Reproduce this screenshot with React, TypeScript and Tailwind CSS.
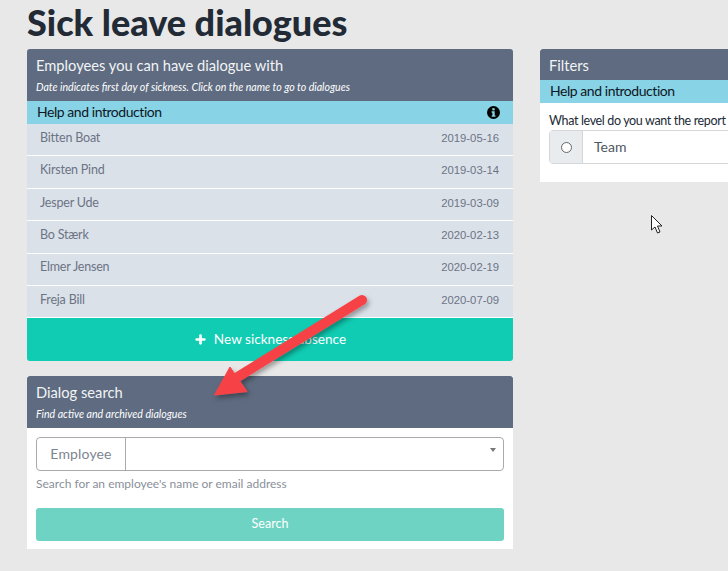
import { Plus } from "lucide-react";

const font = "font-['Lato','Noto_Sans',sans-serif]";

const EMPLOYEES = [
  { name: "Bitten Boat", date: "2019-05-16" },
  { name: "Kirsten Pind", date: "2019-03-14" },
  { name: "Jesper Ude", date: "2019-03-09" },
  { name: "Bo Stærk", date: "2020-02-13" },
  { name: "Elmer Jensen", date: "2020-02-19" },
  { name: "Freja Bill", date: "2020-07-09" },
];

function PanelHead({ title, sub }: { title: string; sub?: string }) {
  return (
    <div className="bg-[#5e6b80] text-white px-[9px] rounded-t-[3px]">
      <div className="text-[14.7px] leading-[20px] pt-[6px] pb-[5px] text-[#f2f4f6]">{title}</div>
      {sub && <div className="text-[10.6px] italic leading-[14px] pb-[7px]">{sub}</div>}
    </div>
  );
}

function HelpBar({ icon }: { icon?: boolean }) {
  return (
    <div className="h-[23px] bg-[#88d3e6] flex items-center justify-between pl-[10px] pr-[13px] pb-[2px] text-[14px] tracking-[-0.45px] text-[#0f1724]">
      <span>Help and introduction</span>
      {icon && (
        <svg width="13" height="13" viewBox="0 0 13 13" className="mt-[1px]">
          <circle cx="6.5" cy="6.5" r="6.5" fill="#000000" />
          <rect x="5.3" y="2.2" width="2.4" height="2.2" fill="#88d3e6" />
          <path d="M4.6 5.3 H7.7 V9.4 H8.5 V10.8 H4.6 V9.4 H5.4 V6.7 H4.6 Z" fill="#88d3e6" />
        </svg>
      )}
    </div>
  );
}

function EmployeeRow({ name, date }: { name: string; date: string }) {
  return (
    <div className="h-[32.4px] bg-[#dbe1e9] border-b border-white flex items-center justify-between pl-[13px] pr-[14px] pb-[3px] text-[12.5px] tracking-[-0.2px] text-[#6b7485]">
      <span>{name}</span>
      <span className="font-['Liberation_Sans',sans-serif] text-[11.3px] tracking-normal">{date}</span>
    </div>
  );
}

export default function App() {
  return (
    <div className={`relative w-[728px] h-[571px] overflow-hidden bg-[#e8e8e8] ${font}`}>
      <h1 className="pl-[27px] h-[49px] text-[36px] leading-[44px] font-black text-[#212a35]">Sick leave dialogues</h1>

      <div className="flex items-start pl-[27px] gap-[27px]">
        <div className="w-[486px] shrink-0">
          <PanelHead title="Employees you can have dialogue with" sub="Date indicates first day of sickness. Click on the name to go to dialogues" />
          <HelpBar icon />
          {EMPLOYEES.map((e) => (
            <EmployeeRow key={e.name} name={e.name} date={e.date} />
          ))}
          <div className="h-[43px] bg-[#10ccb2] rounded-b-[3px] flex items-center justify-center gap-[7px] pb-[1px] text-white text-[13.6px]">
            <Plus className="w-[13px] h-[13px]" strokeWidth={5} />
            <span>New sickness absence</span>
          </div>

          <div className="mt-[15px] bg-white">
            <PanelHead title="Dialog search" sub="Find active and archived dialogues" />
            <div className="px-[9px] pt-[9px] pb-[8px]">
              <div className="h-[34px] flex border border-[#aaaaaa] rounded-[4px]">
                <div className="w-[89px] border-r border-[#aaaaaa] flex items-center justify-center pb-[2px] text-[14px] text-[#7d8590] tracking-[0.15px]">Employee</div>
                <div className="flex-1 relative">
                  <div className="absolute right-[7px] top-[10px] border-x-[3px] border-x-transparent border-t-[4px] border-t-[#777777]" />
                </div>
              </div>
              <div className="text-[12px] leading-[16px] text-[#8a9099] mt-[5px]">Search for an employee's name or email address</div>
              <div className="mt-[16px] h-[33px] bg-[#6fd3c4] rounded-[3px] flex items-center justify-center text-white text-[12.5px]">Search</div>
            </div>
          </div>
        </div>

        <div className="w-[300px] shrink-0 bg-white pb-[18px]">
          <div className="h-[31px]">
            <PanelHead title="Filters" />
          </div>
          <HelpBar />
          <div className="px-[9px] pt-[10px] text-[12.5px] leading-[16px] tracking-[-0.35px] text-[#212a35] whitespace-nowrap">What level do you want the report</div>
          <div className="ml-[9px] mt-[1px] h-[34px] flex border border-[#d5d7da] rounded-l-[4px]">
            <div className="w-[33px] bg-[#e9ecef] border-r border-[#d5d7da] flex items-center justify-center">
              <div className="w-[11px] h-[11px] rounded-full border border-[#666666] bg-white" />
            </div>
            <div className="flex-1 pl-[11px] pb-[2px] flex items-center text-[14px] text-[#4f5761]">Team</div>
          </div>
        </div>
      </div>

      {/* annotation arrow */}
      <svg className="absolute left-[200px] top-[285px]" width="180" height="125" viewBox="200 285 180 125">
        <defs>
          <filter id="arrow-shadow" x="-20%" y="-20%" width="140%" height="140%">
            <feDropShadow dx="2" dy="3" stdDeviation="2.5" floodColor="#000" floodOpacity="0.35" />
          </filter>
        </defs>
        <g filter="url(#arrow-shadow)">
          <path d="M362 300 L236 378" stroke="#f64347" strokeWidth="10" strokeLinecap="round" fill="none" />
          <path d="M214.5 395 L230 367 L247 391.5 Z" fill="#f64347" stroke="#f64347" strokeWidth="1" />
        </g>
      </svg>

      {/* mouse cursor */}
      <svg className="absolute left-[650px] top-[214px]" width="16" height="21" viewBox="0 0 16 21">
        <path d="M1.5 1.5 L1.5 16 L5 13 L7.5 19 L10 18 L7.5 12 L12 12 Z" fill="#ffffff" stroke="#222222" strokeWidth="1" strokeLinejoin="miter" />
      </svg>
    </div>
  );
}
